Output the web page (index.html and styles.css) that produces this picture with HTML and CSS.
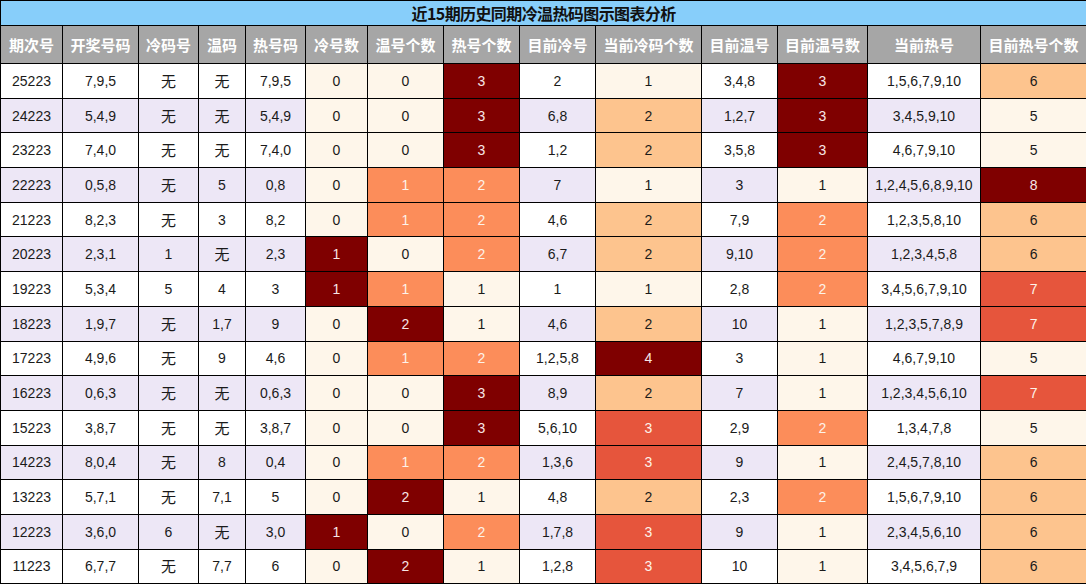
FILE: index.html
```html
<!DOCTYPE html>
<html lang="zh">
<head>
<meta charset="utf-8">
<title>近15期历史同期冷温热码图示图表分析</title>
<link rel="stylesheet" href="styles.css">
</head>
<body>
<table class="chart">
<colgroup>
<col class="w62"><col class="w76"><col class="w60"><col class="w47"><col class="w60"><col class="w62"><col class="w76"><col class="w76"><col class="w76"><col class="w106"><col class="w76"><col class="w90"><col class="w113"><col class="w106">
</colgroup>
<thead>
<tr class="title"><th colspan="14">近15期历史同期冷温热码图示图表分析</th></tr>
<tr class="head"><th>期次号</th><th>开奖号码</th><th>冷码号</th><th>温码</th><th>热号码</th><th>冷号数</th><th>温号个数</th><th>热号个数</th><th>目前冷号</th><th>当前冷码个数</th><th>目前温号</th><th>目前温号数</th><th>当前热号</th><th>目前热号个数</th></tr>
</thead>
<tbody>
<tr><td>25223</td><td>7,9,5</td><td class="cj">无</td><td class="cj">无</td><td>7,9,5</td><td class="c0">0</td><td class="c0">0</td><td class="c4">3</td><td>2</td><td class="c0">1</td><td>3,4,8</td><td class="c4">3</td><td>1,5,6,7,9,10</td><td class="c1">6</td></tr>
<tr><td>24223</td><td>5,4,9</td><td class="cj">无</td><td class="cj">无</td><td>5,4,9</td><td class="c0">0</td><td class="c0">0</td><td class="c4">3</td><td>6,8</td><td class="c1">2</td><td>1,2,7</td><td class="c4">3</td><td>3,4,5,9,10</td><td class="c0">5</td></tr>
<tr><td>23223</td><td>7,4,0</td><td class="cj">无</td><td class="cj">无</td><td>7,4,0</td><td class="c0">0</td><td class="c0">0</td><td class="c4">3</td><td>1,2</td><td class="c1">2</td><td>3,5,8</td><td class="c4">3</td><td>4,6,7,9,10</td><td class="c0">5</td></tr>
<tr><td>22223</td><td>0,5,8</td><td class="cj">无</td><td>5</td><td>0,8</td><td class="c0">0</td><td class="c2">1</td><td class="c2">2</td><td>7</td><td class="c0">1</td><td>3</td><td class="c0">1</td><td>1,2,4,5,6,8,9,10</td><td class="c4">8</td></tr>
<tr><td>21223</td><td>8,2,3</td><td class="cj">无</td><td>3</td><td>8,2</td><td class="c0">0</td><td class="c2">1</td><td class="c2">2</td><td>4,6</td><td class="c1">2</td><td>7,9</td><td class="c2">2</td><td>1,2,3,5,8,10</td><td class="c1">6</td></tr>
<tr><td>20223</td><td>2,3,1</td><td>1</td><td class="cj">无</td><td>2,3</td><td class="c4">1</td><td class="c0">0</td><td class="c2">2</td><td>6,7</td><td class="c1">2</td><td>9,10</td><td class="c2">2</td><td>1,2,3,4,5,8</td><td class="c1">6</td></tr>
<tr><td>19223</td><td>5,3,4</td><td>5</td><td>4</td><td>3</td><td class="c4">1</td><td class="c2">1</td><td class="c0">1</td><td>1</td><td class="c0">1</td><td>2,8</td><td class="c2">2</td><td>3,4,5,6,7,9,10</td><td class="c3">7</td></tr>
<tr><td>18223</td><td>1,9,7</td><td class="cj">无</td><td>1,7</td><td>9</td><td class="c0">0</td><td class="c4">2</td><td class="c0">1</td><td>4,6</td><td class="c1">2</td><td>10</td><td class="c0">1</td><td>1,2,3,5,7,8,9</td><td class="c3">7</td></tr>
<tr><td>17223</td><td>4,9,6</td><td class="cj">无</td><td>9</td><td>4,6</td><td class="c0">0</td><td class="c2">1</td><td class="c2">2</td><td>1,2,5,8</td><td class="c4">4</td><td>3</td><td class="c0">1</td><td>4,6,7,9,10</td><td class="c0">5</td></tr>
<tr><td>16223</td><td>0,6,3</td><td class="cj">无</td><td class="cj">无</td><td>0,6,3</td><td class="c0">0</td><td class="c0">0</td><td class="c4">3</td><td>8,9</td><td class="c1">2</td><td>7</td><td class="c0">1</td><td>1,2,3,4,5,6,10</td><td class="c3">7</td></tr>
<tr><td>15223</td><td>3,8,7</td><td class="cj">无</td><td class="cj">无</td><td>3,8,7</td><td class="c0">0</td><td class="c0">0</td><td class="c4">3</td><td>5,6,10</td><td class="c3">3</td><td>2,9</td><td class="c2">2</td><td>1,3,4,7,8</td><td class="c0">5</td></tr>
<tr><td>14223</td><td>8,0,4</td><td class="cj">无</td><td>8</td><td>0,4</td><td class="c0">0</td><td class="c2">1</td><td class="c2">2</td><td>1,3,6</td><td class="c3">3</td><td>9</td><td class="c0">1</td><td>2,4,5,7,8,10</td><td class="c1">6</td></tr>
<tr><td>13223</td><td>5,7,1</td><td class="cj">无</td><td>7,1</td><td>5</td><td class="c0">0</td><td class="c4">2</td><td class="c0">1</td><td>4,8</td><td class="c1">2</td><td>2,3</td><td class="c2">2</td><td>1,5,6,7,9,10</td><td class="c1">6</td></tr>
<tr><td>12223</td><td>3,6,0</td><td>6</td><td class="cj">无</td><td>3,0</td><td class="c4">1</td><td class="c0">0</td><td class="c2">2</td><td>1,7,8</td><td class="c3">3</td><td>9</td><td class="c0">1</td><td>2,3,4,5,6,10</td><td class="c1">6</td></tr>
<tr><td>11223</td><td>6,7,7</td><td class="cj">无</td><td>7,7</td><td>6</td><td class="c0">0</td><td class="c4">2</td><td class="c0">1</td><td>1,2,8</td><td class="c3">3</td><td>10</td><td class="c0">1</td><td>3,4,5,6,7,9</td><td class="c1">6</td></tr>
</tbody>
</table>
</body>
</html>
```

FILE: styles.css
```css
html, body {
  margin: 0;
  padding: 0;
  background: #ffffff;
}

.chart {
  width: 1086px;
  table-layout: fixed;
  border-collapse: collapse;
  font-family: "Liberation Sans", Arial, "Noto Sans CJK SC", sans-serif;
  font-size: 14px;
  color: #1a1a1a;
}

.w47 { width: 47px; }
.w60 { width: 60px; }
.w62 { width: 62px; }
.w76 { width: 76px; }
.w90 { width: 90px; }
.w106 { width: 106px; }
.w113 { width: 113px; }

.chart th,
.chart td {
  border: 1px solid #000;
  padding: 0;
  text-align: center;
  vertical-align: middle;
  white-space: nowrap;
  overflow: hidden;
}

.title th {
  height: 24px;
  background: #87cefa;
  color: #111;
  font-family: "Noto Sans CJK SC", "Liberation Sans", sans-serif;
  font-size: 16px;
  font-weight: bold;
  line-height: 22px;
  letter-spacing: -0.6px;
}

.head th {
  height: 37px;
  background: #a6a6a6;
  color: #ffffff;
  font-family: "Noto Sans CJK SC", "Liberation Sans", sans-serif;
  font-size: 15px;
  font-weight: bold;
  line-height: 20px;
}

.chart tbody td {
  height: 33.7px;
  line-height: 18px;
}

.chart tbody tr:nth-child(odd) td { background: #ffffff; }
.chart tbody tr:nth-child(even) td { background: #ede7f6; }

.chart td.cj {
  font-family: "Noto Sans CJK SC", sans-serif;
  font-size: 15px;
}

.chart tbody tr td.c0 { background: #fef6ea; color: #1a1a1a; }
.chart tbody tr td.c1 { background: #fdc48e; color: #1a1a1a; }
.chart tbody tr td.c2 { background: #fc8d5a; color: #fdf3ea; }
.chart tbody tr td.c3 { background: #e6553c; color: #fdf3ea; }
.chart tbody tr td.c4 { background: #7f0000; color: #f7e6e6; }
```
